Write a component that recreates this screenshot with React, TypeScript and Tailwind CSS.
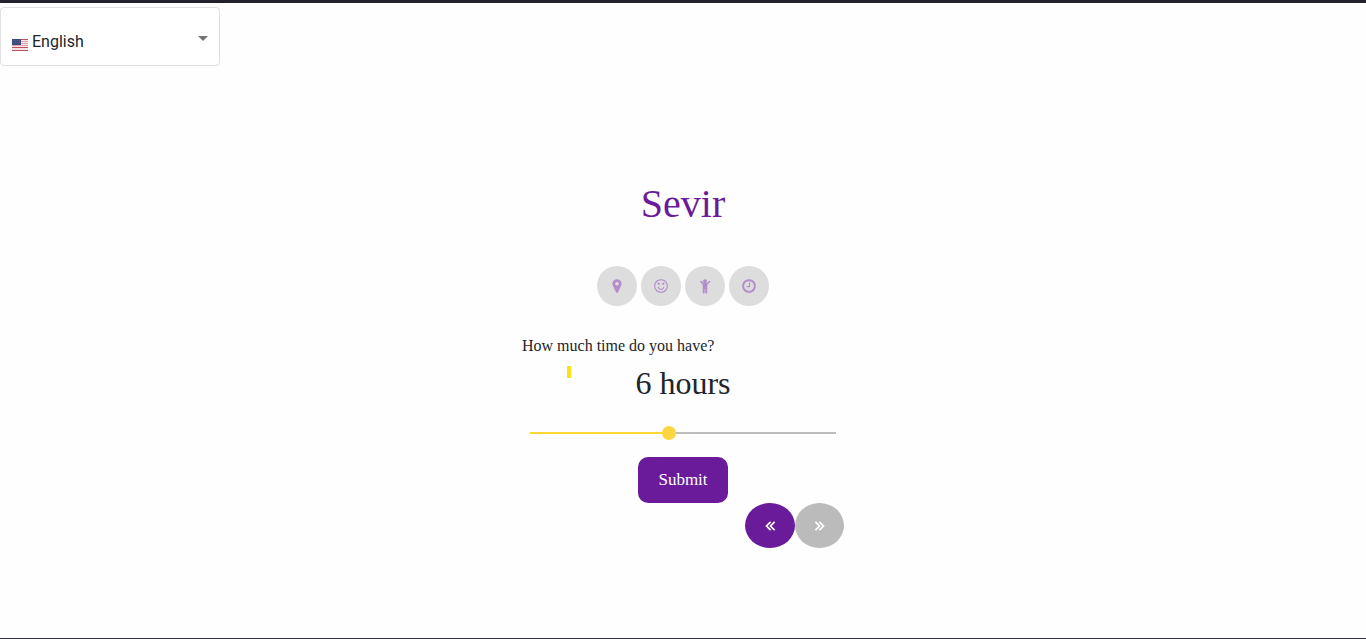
import { useState } from "react";

const icons = [
  {
    label: "Location",
    d: "M1100 640q0-84-60-144t-144-60-144 60-60 144 60 144 144 60 144-60 60-144zm308 0q0 109-33 179l-364 774q-16 33-47.5 52t-67.5 19-67.5-19-46.5-52l-365-774q-33-70-33-179 0-212 150-362t362-150 362 150 150 362z",
  },
  {
    label: "Mood",
    d: "M1262 1075q-37 121-138 195t-228 74-228-74-138-195q-8-25 4-48.5t38-31.5q25-8 48.5 4t31.5 38q25 80 92.5 129.5t151.5 49.5 151.5-49.5 92.5-129.5q8-26 32-38t49-4 37 31.5 4 48.5zm-494-435q0 53-37.5 90.5t-90.5 37.5-90.5-37.5-37.5-90.5 37.5-90.5 90.5-37.5 90.5 37.5 37.5 90.5zm512 0q0 53-37.5 90.5t-90.5 37.5-90.5-37.5-37.5-90.5 37.5-90.5 90.5-37.5 90.5 37.5 37.5 90.5zm256 256q0-130-51-248.5t-136.5-204-204-136.5-248.5-51-248.5 51-204 136.5-136.5 204-51 248.5 51 248.5 136.5 204 204 136.5 248.5 51 248.5-51 204-136.5 136.5-204 51-248.5zm128 0q0 209-103 385.5t-279.5 279.5-385.5 103-385.5-103-279.5-279.5-103-385.5 103-385.5 279.5-279.5 385.5-103 385.5 103 279.5 279.5 103 385.5z",
  },
  {
    label: "Company",
    d: "M1412 476l-260 292v856q0 46-33 79t-79 33-79-33-33-79v-384h-64v384q0 46-33 79t-79 33-79-33-33-79v-856l-260-292q-28-28-28-68t28-68q29-28 68.5-28t67.5 28l228 228h368l228-228q28-28 68-28t68 28q28 29 28 68.5t-28 67.5zM1120 352q0 93-65.5 158.5t-158.5 65.5-158.5-65.5-65.5-158.5 65.5-158.5 158.5-65.5 158.5 65.5 65.5 158.5z",
  },
  {
    label: "Time",
    d: "M1024 544v448q0 14-9 23t-23 9h-320q-14 0-23-9t-9-23v-64q0-14 9-23t23-9h224v-352q0-14 9-23t23-9h64q14 0 23 9t9 23zm416 352q0-148-73-273t-198-198-273-73-273 73-198 198-73 273 73 273 198 198 273 73 273-73 198-198 73-273zm224 0q0 209-103 385.5t-279.5 279.5-385.5 103-385.5-103-279.5-279.5-103-385.5 103-385.5 279.5-279.5 385.5-103 385.5 103 279.5 279.5 103 385.5z",
  },
];

function Flag() {
  return (
    <svg viewBox="0 0 16 12" className="h-3 w-4" aria-hidden="true">
      <rect width="16" height="12" fill="#f6e6ea" />
      {[0, 2, 4, 6, 8, 11].map((y) => (
        <rect key={y} y={y} width="16" height="1" fill={y > 7 || y === 0 ? "#c0505c" : "#e3a3ad"} />
      ))}
      <rect width="9" height="6" fill="#3d4a7c" />
      <path d="M1 1.5h7M1 3.5h7" stroke="#66729c" strokeWidth=".6" strokeDasharray="1 1" />
    </svg>
  );
}

function Chevrons({ next = false }: { next?: boolean }) {
  return (
    <svg viewBox="0 0 12 12" className="size-3" fill="none" stroke="currentColor" strokeWidth="1.7" aria-hidden="true">
      <path d={next ? "M1.4 1.9 5.5 6 1.4 10.1M5.4 1.9 9.5 6 5.4 10.1" : "M6.6 1.9 2.5 6 6.6 10.1M10.6 1.9 6.5 6 10.6 10.1"} />
    </svg>
  );
}

export default function App() {
  const [hours, setHours] = useState(6);
  const filled = ((hours - 1) / 11) * 100;

  return (
    <div className="flex min-h-screen flex-col border-t-3 border-b border-t-[#24212d] border-b-[#30303c] bg-[#fefefe] font-['Liberation_Serif',serif] text-[#212529]">
      <header className="pt-1">
        <div className="grid w-[220px] items-center">
          <select
            aria-label="Language"
            defaultValue="en"
            className="col-start-1 row-start-1 h-[59px] w-full appearance-none rounded border border-[#e0e0e0] bg-white pt-2.5 pl-[31px] font-['Roboto',sans-serif] text-base text-[#212529]"
          >
            <option value="en">English</option>
          </select>
          <span className="pointer-events-none col-start-1 row-start-1 flex items-center justify-between px-3">
            <span className="pt-4">
              <Flag />
            </span>
            <span className="pt-1">
              <svg viewBox="0 0 10 5" className="h-[5px] w-2.5" fill="#757575" aria-hidden="true">
                <path d="M0 0h10L5 5z" />
              </svg>
            </span>
          </span>
        </div>
      </header>

      <main className="mx-auto flex w-full max-w-[322px] flex-col items-center pt-[114px]">
        <h1 className="text-[40px] leading-12 text-[#6a1b9a]">Sevir</h1>

        <nav aria-label="Steps" className="mt-[38px] flex gap-1">
          {icons.map((icon) => (
            <button
              key={icon.label}
              type="button"
              aria-label={icon.label}
              disabled
              className="flex size-10 items-center justify-center rounded-full bg-[#dddddd] text-[#b48dcb]"
            >
              <svg viewBox="0 0 1792 1792" className="size-4" fill="currentColor" aria-hidden="true">
                <path d={icon.d} />
              </svg>
            </button>
          ))}
        </nav>

        <label htmlFor="hours" className="mt-7 self-start text-base leading-6">
          How much time do you have?
        </label>
        <div className="grid w-full grid-cols-[1fr_auto_1fr]">
          <span className="mt-2 ml-[45px] h-3 w-1 bg-[#fbe116]" />
          <output htmlFor="hours" className="text-[32px] leading-[50px]">
            {hours} hours
          </output>
        </div>

        <div className="mt-2.5 grid w-full items-center">
          <div className="col-start-1 row-start-1 mx-2 h-0.5 bg-[#bdbdbd]">
            <div className="h-full bg-[#fdd835]" style={{ width: `${filled}%` }} />
          </div>
          <input
            id="hours"
            type="range"
            min={1}
            max={12}
            value={hours}
            onChange={(e) => setHours(Number(e.target.value))}
            className="col-start-1 row-start-1 h-[30px] w-full appearance-none bg-transparent [&::-webkit-slider-thumb]:size-3.5 [&::-webkit-slider-thumb]:appearance-none [&::-webkit-slider-thumb]:rounded-full [&::-webkit-slider-thumb]:bg-[#fdd540]"
          />
        </div>

        <button type="submit" className="mt-[9px] h-[46px] w-[90px] rounded-[10px] bg-[#6a1b9a] text-[17px] text-white">
          Submit
        </button>
        <div className="flex self-end">
          <button
            type="button"
            aria-label="Previous"
            className="flex h-[45px] w-[50px] items-center justify-center rounded-[50%] bg-[#6a1b9a] text-white"
          >
            <Chevrons />
          </button>
          <button
            type="button"
            aria-label="Next"
            disabled
            className="flex h-[45px] w-[49px] items-center justify-center rounded-[50%] bg-[#bbbbbb] text-white"
          >
            <Chevrons next />
          </button>
        </div>
      </main>
    </div>
  );
}
